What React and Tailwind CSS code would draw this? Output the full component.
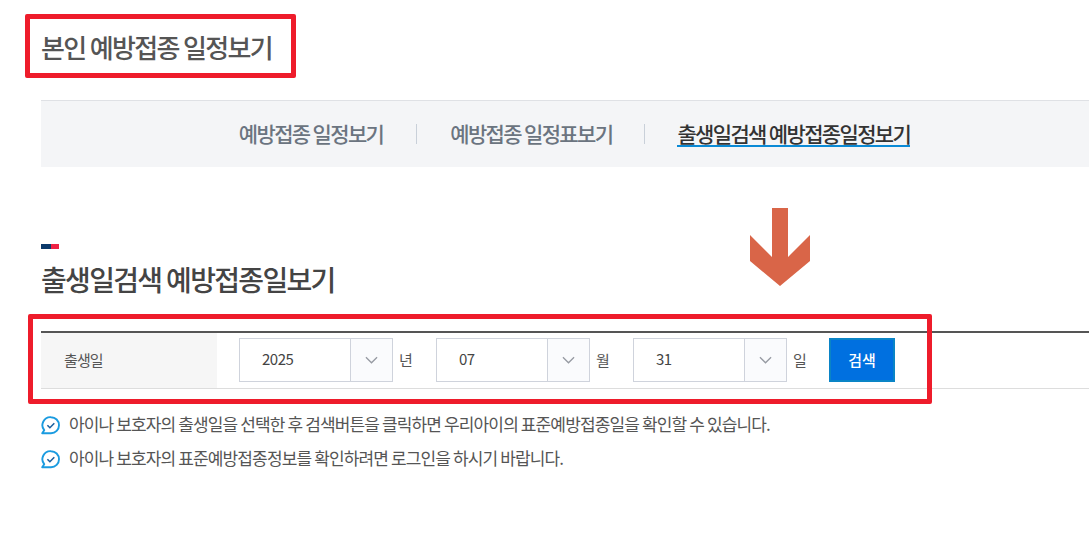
function DateSelect({ value, unit }) {
    return (
        <div className="flex items-center">
            <div className="flex h-[44px] w-[154px] border border-[#cfd3dc] bg-white">
                <div className="flex flex-1 items-center pl-[22px] pb-[1px] text-[15px] tracking-[-0.5px] text-[#444]">{value}</div>
                <div className="flex w-[42px] items-center justify-center border-l border-[#cfd3dc] bg-[#fafbfd]">
                    <svg width="13" height="8" viewBox="0 0 14 8" fill="none" stroke="#969aa2" strokeWidth="1.4">
                        <path d="M1 1l6 6 6-6" />
                    </svg>
                </div>
            </div>
            <span className="ml-[6px] w-[37px] text-[15px] tracking-[-0.5px] text-[#555]">{unit}</span>
        </div>
    )
}

function Note({ children }) {
    return (
        <li className="flex h-[34px] items-center gap-[9px] text-[17px] tracking-[-0.87px] text-[#555]">
            <svg width="19" height="20" viewBox="0 0 19 20" fill="none" className="mt-[4px] shrink-0">
                <path d="M10 1.2a8 8 0 0 1 0 16H1.2l2-3A8 8 0 0 1 10 1.2z" stroke="#1a9be0" strokeWidth="1.9" strokeLinejoin="round" />
                <path d="M6.4 9.2l2.5 2.5 4.4-4.4" stroke="#1b5f9e" strokeWidth="1.6" />
            </svg>
            <span className="leading-[24px]">{children}</span>
        </li>
    )
}

export default function App() {
    return (
        <div className="relative h-[545px] w-[1089px] overflow-hidden bg-white pl-[41px] font-['Noto_Sans_CJK_KR','Noto_Sans',sans-serif]">
            <h1 className="flex h-[100px] items-center pb-[8px] text-[26px] font-medium tracking-[-1.65px] text-[#555]">본인 예방접종 일정보기</h1>

            <nav className="flex h-[67px] items-center justify-center border-t border-[#dfe1e5] bg-[#f4f5f7] pl-[19px]">
                <a className="text-[21px] font-medium tracking-[-1.65px] text-[#6b7480]">예방접종 일정보기</a>
                <span className="mx-[33px] h-[20px] w-px bg-[#c9d0d9]" />
                <a className="text-[21px] font-medium tracking-[-1.65px] text-[#6b7480]">예방접종 일정표보기</a>
                <span className="mx-[32px] h-[20px] w-px bg-[#c9d0d9]" />
                <a className="border-b-2 border-[#0a8ad6] text-[21px] leading-[24px] font-medium tracking-[-1.65px] text-[#333]">출생일검색 예방접종일정보기</a>
            </nav>

            <div className="mt-[77px] flex h-[5px] w-[18px]">
                <span className="w-[10px] bg-[#0b3a6b]" />
                <span className="w-[8px] bg-[#ee2244]" />
            </div>
            <h2 className="mt-[10px] text-[28px] leading-[40px] font-medium tracking-[-1.67px] text-[#444]">출생일검색 예방접종일보기</h2>

            <div className="mt-[32px] flex h-[58px] border-t-2 border-[#555] border-b border-b-[#dddddd]">
                <div className="flex w-[176px] items-center bg-[#f6f6f6] pl-[23px] text-[15px] tracking-[-0.9px] text-[#555]">출생일</div>
                <div className="flex items-start pt-[5px] pl-[22px]">
                    <DateSelect value="2025" unit="년" />
                    <DateSelect value="07" unit="월" />
                    <DateSelect value="31" unit="일" />
                    <button className="-ml-[1px] h-[44px] w-[66px] border-2 border-[#0a84c6] bg-[#0070e0] text-[15px] font-medium text-white">검색</button>
                </div>
            </div>

            <ul className="mt-[18px]">
                <Note>아이나 보호자의 출생일을 선택한 후 검색버튼을 클릭하면 우리아이의 표준예방접종일을 확인할 수 있습니다.</Note>
                <Note>아이나 보호자의 표준예방접종정보를 확인하려면 로그인을 하시기 바랍니다.</Note>
            </ul>

            {/* annotations drawn over the page */}
            <div className="absolute top-[14px] left-[25px] h-[64px] w-[271px] rounded-[2px] border-[5px] border-[#ee1c2b]" />
            <div className="absolute top-[314px] left-[28px] h-[90px] w-[904px] rounded-[2px] border-[5px] border-[#ee1c2b]" />
            <svg className="absolute top-[208px] left-[750px]" width="60" height="78" viewBox="0 0 60 78">
                <path d="M22 0h16v49l22-22v26L30 78 0 53V27l22 22z" fill="#d96548" />
            </svg>
        </div>
    )
}
